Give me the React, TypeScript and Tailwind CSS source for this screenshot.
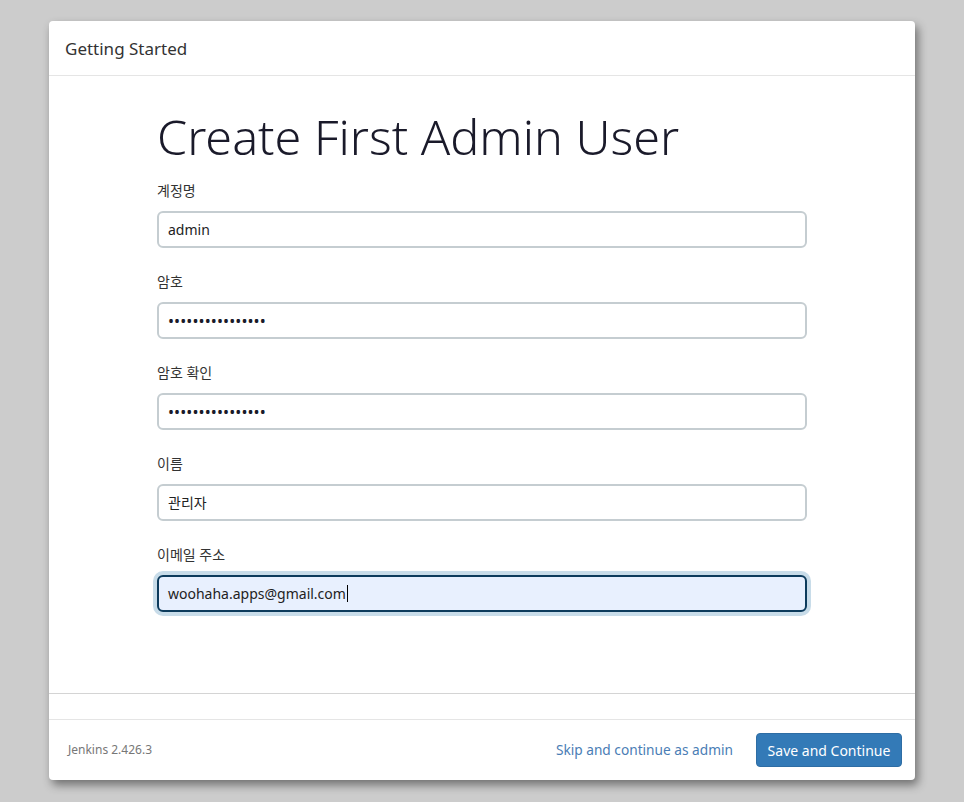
import React from "react";

const font = { fontFamily: '"Noto Sans", "Noto Sans CJK KR", sans-serif' };

function Field({ label, children }: { label: string; children: React.ReactNode }) {
  return (
    <div className="flex flex-col">
      <div className="h-[21px] text-[14px] leading-[21px] text-[#333]">{label}</div>
      <div className="h-[10px]" />
      {children}
    </div>
  );
}

function Box({ text, password }: { text: string; password?: boolean }) {
  return (
    <div className="flex h-[37px] w-[650px] items-center rounded-[6px] border-2 border-[#c5cdd1] bg-white pl-[9px] text-[14px] text-[#222]">
      {password ? <span className="text-[16px] tracking-[0.1px] text-[#1a1a2a]">{text}</span> : text}
    </div>
  );
}

export default function App() {
  return (
    <div className="min-h-[802px] w-[964px] bg-[#cccccc] pt-[21px]" style={font}>
      <div className="ml-[49px] flex h-[759px] w-[866px] flex-col rounded-[4px] bg-white shadow-[3px_5px_10px_rgba(0,0,0,0.45)]">
        <div className="flex h-[55px] items-center border-b border-[#e5e5e5] pl-[16px] text-[17px] text-[#333]">
          <span className="mt-[2px]">Getting Started</span>
        </div>
        <div className="flex flex-1 flex-col pl-[108px]">
          <h1 className="mt-[28px] text-[48.5px] font-light leading-[64px] text-[#1a1a2a]">Create First Admin User</h1>
          <div className="mt-[12px] flex flex-col gap-[23px]">
            <Field label="계정명">
              <Box text="admin" />
            </Field>
            <Field label="암호">
              <Box text="••••••••••••••••" password />
            </Field>
            <Field label="암호 확인">
              <Box text="••••••••••••••••" password />
            </Field>
            <Field label="이름">
              <Box text="관리자" />
            </Field>
            <Field label="이메일 주소">
              <div className="flex h-[37px] w-[650px] items-center rounded-[6px] border-2 border-[#0d3b5c] bg-[#e8f0fe] pl-[9px] text-[14px] text-[#222] shadow-[0_0_0_4px_#c8dce9]">
                woohaha.apps@gmail.com
                <span className="ml-[1px] inline-block h-[17px] w-[1px] bg-black" />
              </div>
            </Field>
          </div>
        </div>
        <div className="h-[26px] border-t border-[#d4d4d4]" />
        <div className="flex h-[61px] items-center border-t border-[#e5e5e5] pl-[19px] pr-[13px]">
          <div className="text-[12px] text-[#777]">Jenkins 2.426.3</div>
          <div className="flex-1" />
          <div className="text-[13.7px] text-[#4a7db5]">Skip and continue as admin</div>
          <div className="ml-[23px] flex h-[34px] w-[146px] items-center justify-center rounded-[4px] border border-[#2e6da4] bg-[#337ab7] text-[14px] text-white">
            Save and Continue
          </div>
        </div>
      </div>
    </div>
  );
}
